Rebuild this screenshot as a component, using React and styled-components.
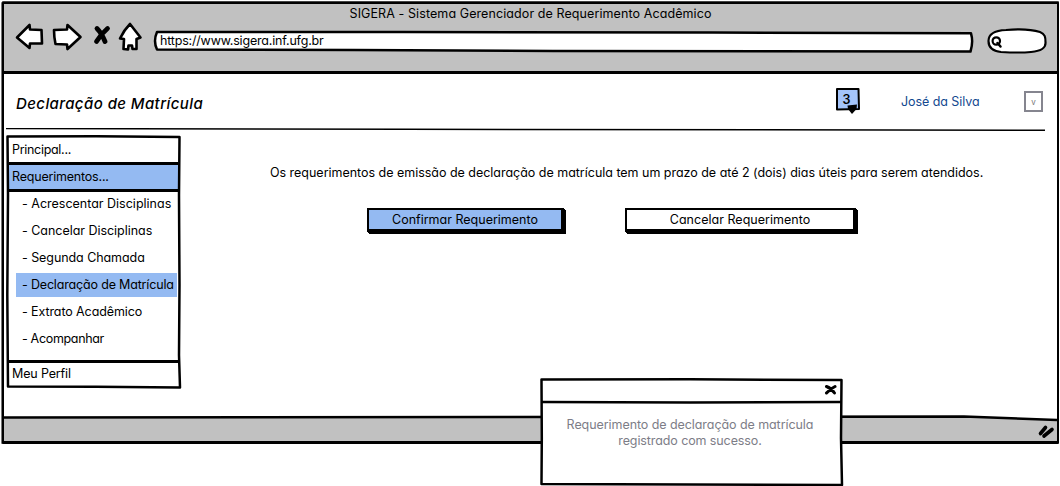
import React from "react";
import styled, { createGlobalStyle, css } from "styled-components";

const ink = "#000";
const blue = "#94baf2";
const gray = "#c1c1c1";

const GlobalStyle = createGlobalStyle`
  * { box-sizing: border-box; }
  body {
    margin: 0;
    background: #fff;
    color: ${ink};
    font-family: Inter, "Open Sans", sans-serif;
    font-feature-settings: "cv11", "calt" 0;
    font-size: 12.5px;
    line-height: 16px;
    overflow: hidden;
  }
  button { font: inherit; font-feature-settings: inherit; color: inherit; }
`;

const Page = styled.div`
  position: relative;
  width: 1060px;
  height: 486px;
  padding: 2px 1px 0 2px;
`;

const Browser = styled.div`
  display: flex;
  flex-direction: column;
  width: 1057px;
  height: 442px;
  border: 2px solid ${ink};
  border-bottom-width: 3px;
  border-radius: 1px;
  box-shadow: 0 -1px 0 #444, -1px 0 0 #777;
  background: #fff;
`;

const Chrome = styled.header`
  height: 70px;
  flex: none;
  background: ${gray};
  border-bottom: 3px solid ${ink};
`;

const WindowTitle = styled.div`
  padding-top: 2px;
  height: 17px;
  text-align: center;
  letter-spacing: ${(p) => p.$track}px;
  white-space: nowrap;
`;

const Toolbar = styled.div`
  display: flex;
  align-items: center;
  height: 40px;
  padding-left: 11px;
`;

const NavIcons = styled.svg`
  display: block;
  width: 130px;
  height: 32px;
  margin-top: -10px;
`;

const SketchOutline = styled.svg`
  position: absolute;
  left: 0;
  top: 0;
  width: 100%;
  height: 100%;
  overflow: visible;
  pointer-events: none;
  fill: ${(p) => p.$fill || "none"};
  stroke: ${ink};
  stroke-width: 2.5px;
  stroke-linejoin: round;
`;

const AddressBar = styled.div`
  position: relative;
  width: 820px;
  height: 21px;
  margin: 0 14px 0 8px;
  padding: 2px 7px;
  letter-spacing: ${(p) => p.$track}px;
`;

const Address = styled.span`
  position: relative;
`;

const SearchBox = styled.svg`
  display: block;
  width: 60px;
  height: 26px;
`;

const Content = styled.main`
  flex: 1;
  display: flex;
  flex-direction: column;
  padding-left: 2px;
`;

const TopBar = styled.div`
  display: flex;
  align-items: center;
  width: 1040px;
  height: 54px;
  padding: 1px 3px 0 10px;
`;

const Heading = styled.h1`
  flex: 1;
  margin: 4px 0 0;
  font-size: 15px;
  font-weight: 500;
  font-style: italic;
  letter-spacing: ${(p) => p.$track}px;
`;

const Notice = styled.svg`
  display: block;
  width: 26px;
  height: 28px;
  margin: -2px 40px 0 0;
`;

const UserName = styled.a`
  width: 123px;
  color: #13488f;
  letter-spacing: ${(p) => p.$track}px;
`;

const DropButton = styled.button`
  width: 19px;
  height: 21px;
  padding: 0;
  border: 2px solid #85858f;
  background: #fff;
  color: #777;
  font-size: 8px;
  line-height: 14px;
`;

const Rule = styled.svg`
  display: block;
  width: 1040px;
  height: 5px;
`;

const Body = styled.div`
  display: flex;
  padding-top: 2px;
`;

const Sidebar = styled.nav`
  position: relative;
  width: 175px;
  height: 254px;
  padding: 3px;
`;

const Section = styled.div`
  height: ${(p) => p.$height}px;
  padding: 0 0 0 3px;
  line-height: ${(p) => p.$line}px;
  letter-spacing: ${(p) => p.$track}px;
  background: ${(p) => (p.$active ? blue : "#fff")};
  ${(p) => p.$lineAbove && css`border-top: 3px solid ${ink};`}
  ${(p) => p.$lineBelow && css`border-bottom: 3px solid ${ink};`}
`;

const SubMenu = styled.ul`
  height: 168px;
  margin: 0;
  padding: 0 1px 0 7px;
  list-style: none;
`;

const SubItem = styled.li`
  height: 24px;
  margin-bottom: 3px;
  padding-left: 6px;
  line-height: 23px;
  white-space: nowrap;
  letter-spacing: ${(p) => p.$track}px;
  background: ${(p) => (p.$active ? blue : "transparent")};
`;

const Panel = styled.section`
  flex: 1;
  padding: 30px 0 0 89px;
`;

const Message = styled.p`
  margin: 0 0 27px;
  white-space: nowrap;
  letter-spacing: ${(p) => p.$track}px;
`;

const Actions = styled.div`
  display: flex;
  gap: 61px;
  padding-left: 97px;
`;

const ActionButton = styled.button`
  width: ${(p) => p.$width}px;
  height: 24px;
  padding: 0;
  border: 2px solid ${ink};
  border-right-width: 3px;
  border-bottom-width: 3px;
  box-shadow: 1px 1px 0 ${ink}, 2px 2px 0 ${ink};
  background: ${(p) => (p.$primary ? blue : "#fff")};
  letter-spacing: ${(p) => p.$track}px;
  line-height: 19px;
`;

const StatusBar = styled.svg`
  display: block;
  flex: none;
  width: 1053px;
  height: 26px;
`;

const Dialog = styled.aside`
  position: absolute;
  left: 540px;
  top: 378px;
  width: 303px;
  height: 108px;
  padding: 3px;
`;

const DialogBar = styled.div`
  position: relative;
  display: flex;
  justify-content: flex-end;
  height: 23px;
  padding: 3px 3px 0 0;
`;

const CloseIcon = styled.svg`
  display: block;
  width: 13px;
  height: 11px;
`;

const DialogText = styled.p`
  position: relative;
  margin: 13px 3px 0 0;
  color: #7d7d87;
  text-align: center;
  white-space: nowrap;
`;

const Line = styled.span`
  display: block;
  letter-spacing: ${(p) => p.$track}px;
`;

const subItems = [
  { label: "- Acrescentar Disciplinas", track: 0 },
  { label: "- Cancelar Disciplinas", track: -0.03 },
  { label: "- Segunda Chamada", track: -0.07 },
  { label: "- Declaração de Matrícula", track: -0.17, active: true },
  { label: "- Extrato Acadêmico", track: -0.1 },
  { label: "- Acompanhar", track: -0.33 },
];

function Navigation() {
  return (
    <NavIcons viewBox="15 21 130 32" fill="#fff" stroke={ink} strokeWidth="2.6" strokeLinejoin="round" strokeLinecap="round">
      <path d="M17 38.500 L29.5 26 L30 30.5 L41.500 31 L42 44.500 L30 44.5 L29.5 49 Z" />
      <path d="M54 31 L67 30.500 L67.5 26 L80.500 38 L67.500 50 L67 45.500 L55.500 45 Q54 38 54 31 Z" />
      <path d="M97 29.500 Q101.500 34 105 42.500 M107.500 29.500 Q101.500 34.500 96.500 42.500" strokeWidth="4.800" fill="none" />
      <path d="M130 25 L140.500 38.500 L136.500 40 L136.500 50 L132.500 50 L132 46.500 L128.500 46.500 L128 50.500 L123.500 50 L124 40 L120 39.500 Q124 31 130 25 Z" />
    </NavIcons>
  );
}

export default function App() {
  return (
    <Page>
      <GlobalStyle />
      <Browser>
        <Chrome>
          <WindowTitle $track={0.09}>SIGERA - Sistema Gerenciador de Requerimento Acadêmico</WindowTitle>
          <Toolbar>
            <Navigation />
            <AddressBar $track={-0.19}>
              <SketchOutline $fill="#fff" viewBox="0 0 820 21">
                <path d="M4 1 L250 1 L560 1.500 L818 2.300 Q820.500 11 817.500 20.500 L400 20 L200 19 L4 18.500 Q0 10 4 1 Z" />
              </SketchOutline>
              <Address>https://www.sigera.inf.ufg.br</Address>
            </AddressBar>
            <SearchBox viewBox="0 0 60 26" fill="#fff" stroke={ink} strokeLinecap="round">
              <path d="M1.500 13 C1.500 6 7 2.500 19 2 C32 0.800 45 1.500 53 4 C58 6 58.500 9 58.500 14 C59 20 55 23 44 24 C33 25 23 24.500 14 24 C5 23 1.500 19 1.500 13 Z" strokeWidth="2.200" />
              <circle cx="9.300" cy="13" r="3.700" strokeWidth="2.200" />
              <path d="M10.500 15 L13.500 18.500" strokeWidth="2.500" />
            </SearchBox>
          </Toolbar>
        </Chrome>
        <Content>
          <TopBar>
            <Heading $track={0.4}>Declaração de Matrícula</Heading>
            <Notice viewBox="0 0 26 28">
              <path d="M2 2 L23.500 2 L24 22 L2 22.500 Z" fill="#a4c4fa" stroke={ink} strokeWidth="2" strokeLinejoin="round" />
              <path d="M12.500 18.500 L22 17.500 L21.500 22 L17 27 L13 22 Z" fill={ink} />
              <text x="11.500" y="16.500" fontSize="12.500" fontWeight="600" textAnchor="middle">3</text>
            </Notice>
            <UserName $track={-0.06}>José da Silva</UserName>
            <DropButton>v</DropButton>
          </TopBar>
          <Rule viewBox="0 0 1040 5" fill="none" stroke={ink}>
            <path d="M0 0.500 L400 1.300 L1039 2.300" strokeWidth="1.500" />
          </Rule>
          <Body>
            <Sidebar>
              <Section $height={24} $line={23} $track={-0.3}>Principal...</Section>
              <Section $height={30} $line={23} $track={-0.2} $active $lineAbove $lineBelow>Requerimentos...</Section>
              <SubMenu>
                {subItems.map((item) => (
                  <SubItem key={item.label} $track={item.track} $active={item.active}>{item.label}</SubItem>
                ))}
              </SubMenu>
              <Section $height={26} $line={21} $track={-0.15} $lineAbove>Meu Perfil</Section>
              <SketchOutline viewBox="0 0 175 254">
                <path d="M1.500 1.500 L90 1.300 L173.500 2 L173 60 L173.500 150 L173 220 L174 252.500 L90 251.800 L2 251.500 L1.300 160 L2 60 Z" />
              </SketchOutline>
            </Sidebar>
            <Panel>
              <Message $track={-0.02}>
                Os requerimentos de emissão de declaração de matrícula tem um prazo de até 2 (dois) dias úteis para serem atendidos.
              </Message>
              <Actions>
                <ActionButton $width={197} $primary $track={0}>Confirmar Requerimento</ActionButton>
                <ActionButton $width={231} $track={0.02}>Cancelar Requerimento</ActionButton>
              </Actions>
            </Panel>
          </Body>
        </Content>
        <StatusBar viewBox="0 0 1053 26">
          <path d="M0 2 L970 2 L1053 5 V26 H0 Z" fill={gray} />
          <path d="M0 2.500 L500 2 L960 1.500 L1053 5" fill="none" stroke={ink} strokeWidth="2.600" />
          <path d="M1036.500 18.500 L1041.500 12.500 M1040 21 L1048 14.500" stroke={ink} strokeWidth="3.600" strokeLinecap="round" />
        </StatusBar>
      </Browser>
      <Dialog>
        <SketchOutline $fill="#fff" viewBox="0 0 303 108">
          <path d="M1.500 1.500 L150 1.300 L301.500 2 L301 60 L302 107 L150 106.500 L1.500 106 L1.800 60 Z" />
          <path d="M2 24 L150 24.500 L301 24" />
        </SketchOutline>
        <DialogBar>
          <CloseIcon viewBox="0 0 13 11" fill="none" stroke={ink} strokeWidth="3" strokeLinecap="round">
            <path d="M2.500 2.500 Q7 4 10.500 9 M11 2.500 Q6 5 2.500 9" />
          </CloseIcon>
        </DialogBar>
        <DialogText>
          <Line $track={-0.07}>Requerimento de declaração de matrícula</Line>
          <Line $track={-0.1}>registrado com sucesso.</Line>
        </DialogText>
      </Dialog>
    </Page>
  );
}
